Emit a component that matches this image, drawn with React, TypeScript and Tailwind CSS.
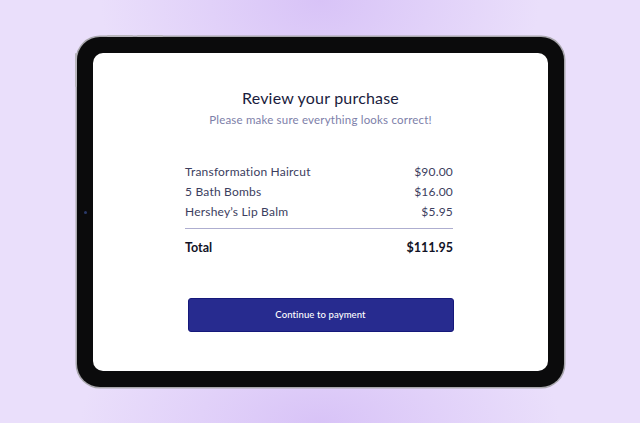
export default function App() {
  const items = [
    { name: "Transformation Haircut", price: "$90.00" },
    { name: "5 Bath Bombs", price: "$16.00" },
    { name: "Hershey’s Lip Balm", price: "$5.95" },
  ];

  return (
    <div
      className="relative flex h-[423px] w-[640px] items-start overflow-hidden bg-[#eadffb] bg-[radial-gradient(ellipse_220px_150px_at_50%_0%,#d8c3f7_0%,rgba(234,223,251,0)_100%),radial-gradient(ellipse_240px_120px_at_50%_100%,#d8c3f7_0%,rgba(234,223,251,0)_100%)] pl-[77px] pt-[37px]"
      style={{ fontFamily: "Lato, 'Noto Sans', sans-serif" }}
    >
      {/* tablet */}
      <div className="relative h-[350px] w-[487px] rounded-[23px] bg-[#0b0b0c] p-[16px] shadow-[0_0_0_1.5px_#a9a7ad]">
        {/* side buttons */}
        <div className="absolute left-[30px] top-[-2px] h-[2px] w-[26px] rounded-full bg-[#b9b6bd]" />
        <div className="absolute left-[60px] top-[-2px] h-[2px] w-[26px] rounded-full bg-[#b9b6bd]" />
        <div className="absolute left-[-2px] top-[16px] h-[34px] w-[2px] rounded-full bg-[#b9b6bd]" />
        {/* camera */}
        <div className="absolute left-[7px] top-[174px] h-[3px] w-[3px] rounded-full bg-[#2a3a6a]" />

        <div className="flex h-full w-full flex-col items-center rounded-[10px] bg-white pt-[35px]">
          <h1 className="text-[16px] leading-[20px] tracking-[0.2px] text-[#1a1c3d]">
            Review your purchase
          </h1>
          <p className="mt-[4px] text-[11.5px] leading-[16px] tracking-[0.2px] text-[#7d80a9]">
            Please make sure everything looks correct!
          </p>

          <div className="mr-[3px] mt-[34px] flex w-[268px] flex-col">
            {items.map((it) => (
              <div
                key={it.name}
                className="flex h-[20px] items-center justify-between text-[12px] tracking-[0.2px] text-[#3b3d5e]"
              >
                <span>{it.name}</span>
                <span>{it.price}</span>
              </div>
            ))}
            <div className="mt-[6px] h-px w-full bg-[#aeaed0]" />
            <div className="mt-[9px] flex h-[20px] items-center justify-between text-[12.5px] font-bold text-[#111226]">
              <span>Total</span>
              <span>$111.95</span>
            </div>
          </div>

          <button className="mt-[40px] flex h-[34px] w-[266px] items-center justify-center rounded-[3px] border border-[#15187a] bg-[#272b8f] text-[9.5px] font-medium tracking-[0.1px] text-white">
            Continue to payment
          </button>
        </div>
      </div>
    </div>
  );
}
